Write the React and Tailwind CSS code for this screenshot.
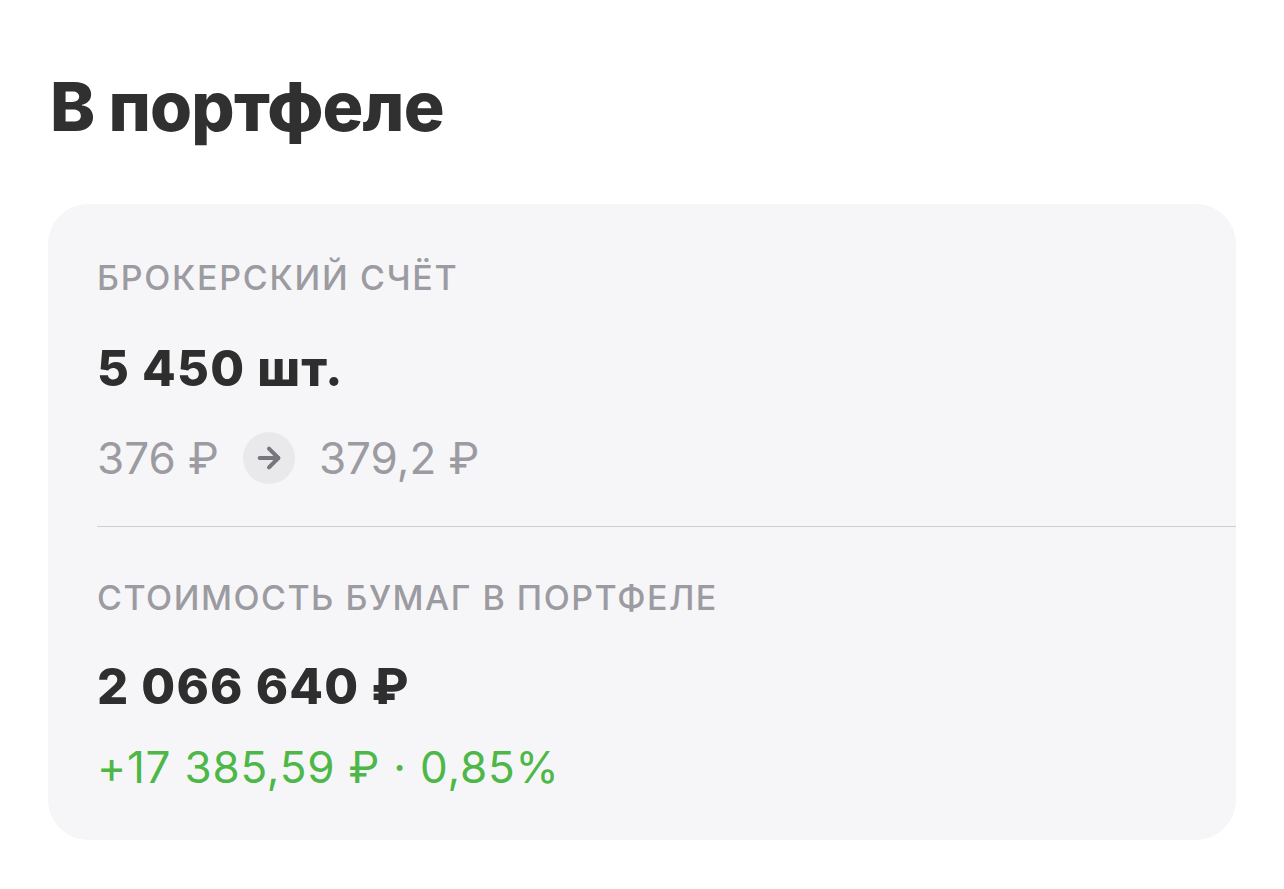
import { ArrowRight } from 'lucide-react';

const font = { fontFamily: 'Inter, "Liberation Sans", sans-serif' };

export default function App() {
  return (
    <div className="w-[1284px] h-[889px] bg-white pl-[48px] pr-[48px] pt-[72px]" style={font}>
      <h1 className="text-[68px] leading-[68px] font-extrabold text-[#303030] tracking-[-0.8px] pl-[2px]">В портфеле</h1>

      <div className="mt-[64px] h-[636px] rounded-[40px] bg-[#f6f6f8] pl-[49px] pt-[54px]">
        <div className="text-[34px] leading-[40px] font-medium text-[#9b9ba1] tracking-[1.7px]">БРОКЕРСКИЙ СЧЁТ</div>
        <div className="mt-[46px] text-[49px] leading-[50px] font-extrabold text-[#2e2e2e] tracking-[1.2px]">5 450 шт.</div>
        <div className="mt-[38px] flex items-center text-[44px] leading-[52px] text-[#9b9ba1]">
          <span>376 ₽</span>
          <span className="ml-[24px] mr-[24px] w-[52px] h-[52px] rounded-full bg-[#e9e9eb] flex items-center justify-center">
            <ArrowRight size={32} strokeWidth={3} color="#76767c" />
          </span>
          <span>379,2 ₽</span>
        </div>

        <div className="mt-[42px] h-[1px] bg-[#cfcfd3]" />

        <div className="mt-[51px] text-[34px] leading-[40px] font-medium text-[#9b9ba1] tracking-[1.5px]">СТОИМОСТЬ БУМАГ В ПОРТФЕЛЕ</div>
        <div className="mt-[44px] text-[49px] leading-[50px] font-extrabold text-[#2e2e2e] tracking-[1.2px]">2 066 640 ₽</div>
        <div className="mt-[30px] text-[44px] leading-[50px] text-[#4db748] tracking-[0.8px]">+17 385,59 ₽ · 0,85%</div>
      </div>
    </div>
  );
}
